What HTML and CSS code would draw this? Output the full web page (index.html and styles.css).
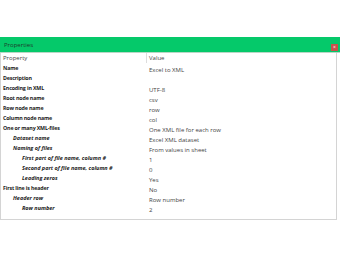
FILE: index.html
```html
<!DOCTYPE html>
<html lang="en">
<head>
  <meta charset="UTF-8" />
  <title>Properties</title>
  <link rel="stylesheet" href="styles.css">
</head>
<body>

  <!-- Properties window -->
  <div class="window">
    <div class="titlebar">
      <span class="title">Properties</span>
      <span class="close">&times;</span>
    </div>

    <div class="panel">
      <div class="row head">
        <div class="label">Property</div>
        <div class="value">Value</div>
      </div>

      <div class="row"><div class="label">Name</div><div class="value">Excel to XML</div></div>
      <div class="row"><div class="label">Description</div><div class="value"></div></div>
      <div class="row"><div class="label">Encoding in XML</div><div class="value">UTF-8</div></div>
      <div class="row"><div class="label">Root node name</div><div class="value">csv</div></div>
      <div class="row"><div class="label">Row node name</div><div class="value">row</div></div>
      <div class="row"><div class="label">Column node name</div><div class="value">col</div></div>
      <div class="row"><div class="label">One or many XML-files</div><div class="value">One XML file for each row</div></div>
      <div class="row sub"><div class="label">Dataset name</div><div class="value">Excel XML dataset</div></div>
      <div class="row sub"><div class="label">Naming of files</div><div class="value">From values in sheet</div></div>
      <div class="row subsub"><div class="label">First part of file name, column #</div><div class="value">1</div></div>
      <div class="row subsub"><div class="label">Second part of file name, column #</div><div class="value">0</div></div>
      <div class="row subsub"><div class="label">Leading zeros</div><div class="value">Yes</div></div>
      <div class="row"><div class="label">First line is header</div><div class="value">No</div></div>
      <div class="row sub"><div class="label">Header row</div><div class="value">Row number</div></div>
      <div class="row subsub"><div class="label">Row number</div><div class="value">2</div></div>
    </div>
  </div>

</body>
</html>
```

FILE: styles.css
```css
body {
  margin: 0;
  background-color: #fff;
  font-family: "Open Sans", "Noto Sans", sans-serif;
  font-size: 6px;
  color: #333;
}

.window {
  margin-top: 37px;
}

.titlebar {
  height: 15px;
  background-color: #05c96a;
  display: flex;
  align-items: center;
  justify-content: space-between;
  padding: 0 2px 0 4px;
  border-bottom: 1px solid #b9d6c6;
}

.title {
  color: #1d3b2a;
  font-size: 6px;
}

.close {
  width: 7px;
  height: 7px;
  margin-top: 5px;
  background-color: #c9524c;
  color: #fff;
  font-size: 5px;
  line-height: 7px;
  text-align: center;
}

.panel {
  margin-right: 3px;
  height: 166px;
  border: 1px solid #d4d4d4;
  border-top: none;
}

.row {
  display: grid;
  grid-template-columns: 146px 1fr;
  height: 10px;
  line-height: 10px;
}

.label {
  padding-left: 2px;
  font-size: 5.3px;
  font-weight: bold;
  letter-spacing: -0.15px;
  color: #1a1a1a;
  white-space: nowrap;
}

.value {
  padding-left: 2px;
  padding-top: 2px;
  color: #444;
  white-space: nowrap;
}

.head .label {
  font-size: 6px;
  font-weight: normal;
  letter-spacing: 0;
  color: #444;
  border-right: 1px solid #ddd;
}

.head .value {
  padding-top: 0;
}

.sub .label,
.subsub .label {
  font-size: 5.5px;
  font-style: italic;
  letter-spacing: 0;
}

.sub .label {
  padding-left: 12px;
}

.subsub .label {
  padding-left: 21px;
}
```
